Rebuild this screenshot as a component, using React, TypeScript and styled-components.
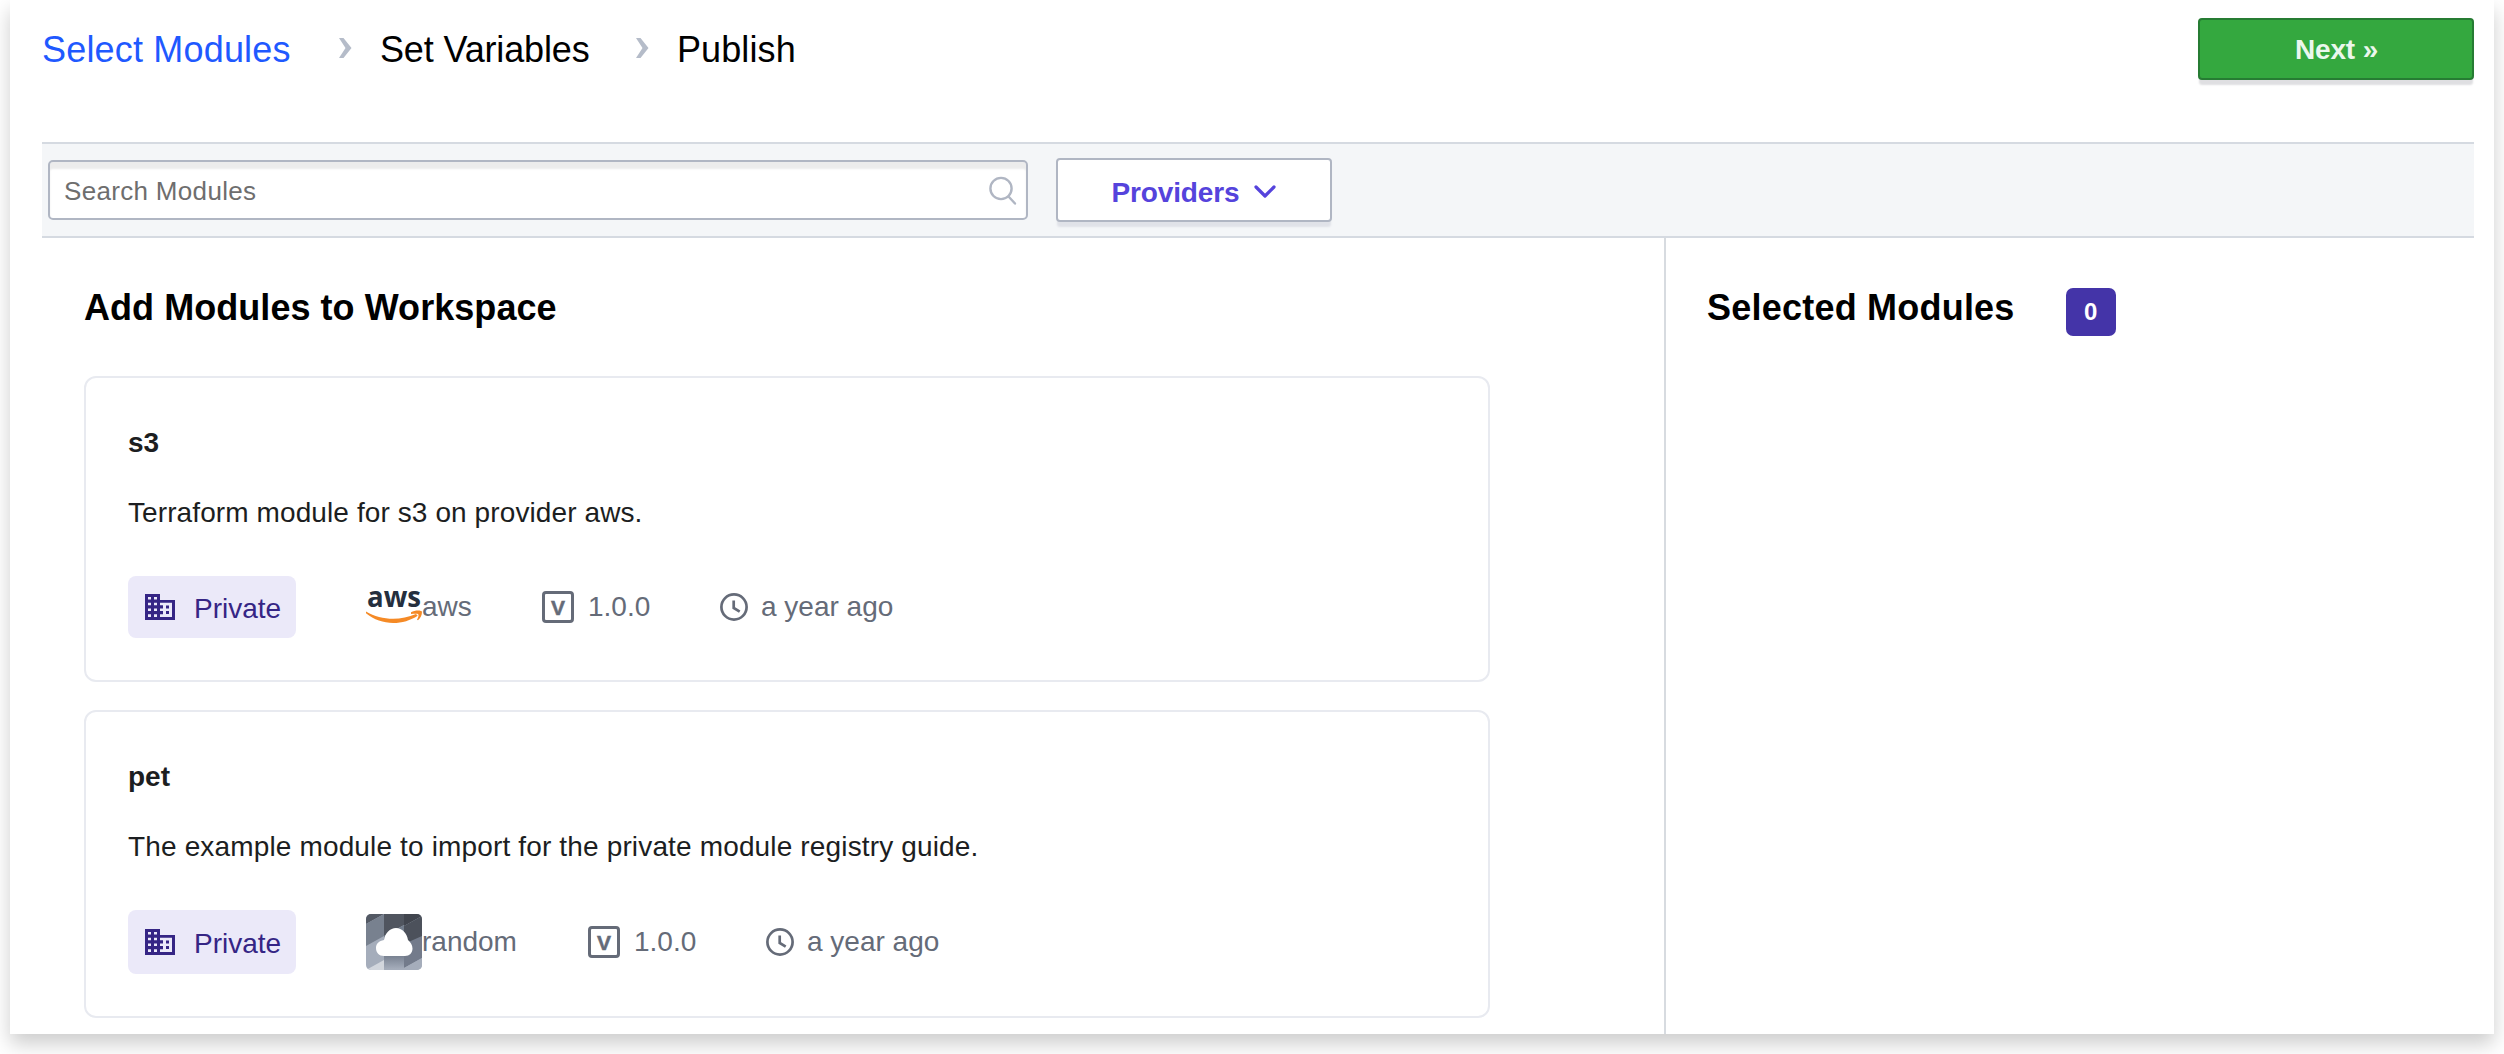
import React from "react";
import styled, { createGlobalStyle } from "styled-components";

const Global = createGlobalStyle`
  * { box-sizing: border-box; }
  body { margin: 0; background: #fff; overflow: hidden; font-family: "Liberation Sans", Arial, sans-serif; color: #000; }
  h2, h3, p { margin: 0; }
  button, input { font-family: inherit; margin: 0; }
  svg { display: block; flex: none; overflow: visible; }
`;
const Page = styled.main`
  height: 1054px;
  padding: 0 10px;
`;
const Panel = styled.div`
  height: 1034px;
  padding: 0 20px 0 32px;
  display: flex;
  flex-direction: column;
  background: #fff;
  box-shadow: 0 10px 19px rgba(0, 0, 0, 0.2);
`;
const Header = styled.header`
  height: 142px;
  flex: none;
  padding-top: 18px;
  display: flex;
  justify-content: space-between;
  align-items: flex-start;
`;
const Steps = styled.nav`
  display: flex;
  align-items: center;
  height: 62px;
  line-height: 40px;
  font-size: 36px;
`;
const Step = styled.span<{ $active?: boolean; $width: number; $track?: number }>`
  width: ${p => p.$width}px;
  padding-top: 2px;
  white-space: nowrap;
  letter-spacing: ${p => p.$track ?? 0}px;
  color: ${p => (p.$active ? "#1f59ff" : "#000")};
`;
const StepArrow = styled.svg`
  width: 13px;
  height: 20px;
  margin: 0 28px 2px 47px;
`;
const ActionButton = styled.button<{ $primary?: boolean }>`
  width: 276px;
  height: ${p => (p.$primary ? 62 : 64)}px;
  display: flex;
  align-items: center;
  justify-content: center;
  gap: 15px;
  padding: ${p => (p.$primary ? "2px 0 0 1px" : "5px 0 0 0")};
  font-size: 28px;
  font-weight: 700;
  letter-spacing: -0.15px;
  border-radius: 4px;
  border: 2px solid ${p => (p.$primary ? "#267c33" : "#b0b6c3")};
  background: ${p => (p.$primary ? "#34a83f" : "#fff")};
  color: ${p => (p.$primary ? "#ebf7ed" : "#5543dc")};
  box-shadow: 0 6px 2px -1px ${p => (p.$primary ? "#dfdfe2" : "#e0e2e8")};
`;
const Toolbar = styled.div`
  height: 96px;
  flex: none;
  display: flex;
  align-items: center;
  gap: 28px;
  padding: 0 6px;
  background: #f4f6f8;
  border: solid #d5dae1;
  border-width: 2px 0;
`;
const SearchBox = styled.label`
  width: 980px;
  height: 60px;
  display: flex;
  align-items: center;
  padding: 2px 9px 0 14px;
  border: 2px solid #b0b6c3;
  border-radius: 5px;
  background: #fff;
  box-shadow: inset 0 7px 2px #ececec;
`;
const SearchInput = styled.input`
  flex: 1;
  padding: 0;
  border: 0;
  outline: 0;
  background: transparent;
  font-size: 26px;
  letter-spacing: 0.32px;
  &::placeholder { color: #6e6e6e; opacity: 1; }
`;
const Columns = styled.div`
  flex: 1;
  min-height: 0;
  display: flex;
`;
const ModulesColumn = styled.section`
  width: 1624px;
  padding: 47px 0 0 42px;
  border-right: 2px solid #d7dbe0;
`;
const SelectedColumn = styled.section`
  padding: 47px 0 0 41px;
  display: flex;
  align-items: flex-start;
  gap: 51px;
`;
const Title = styled.h2<{ $track?: number }>`
  font-size: 36px;
  line-height: 46px;
  letter-spacing: ${p => p.$track ?? 0}px;
  white-space: nowrap;
`;
const Count = styled.span`
  width: 50px;
  height: 48px;
  margin-top: 3px;
  border-radius: 7px;
  background: #4434a8;
  color: #fff;
  font-size: 24px;
  font-weight: 700;
  line-height: 48px;
  text-align: center;
`;
const List = styled.div`
  display: flex;
  flex-direction: column;
  gap: 28px;
  margin-top: 45px;
`;
const Card = styled.article<{ $height: number }>`
  width: 1406px;
  height: ${p => p.$height}px;
  padding: 49px 42px 0;
  border: 2px solid #e8eaf0;
  border-radius: 12px;
  color: #1c1e21;
  font-size: 28px;
`;
const Name = styled.h3`
  font-size: 28px;
  line-height: 32px;
`;
const Description = styled.p<{ $track: number }>`
  margin-top: 38px;
  line-height: 32px;
  white-space: nowrap;
  letter-spacing: ${p => p.$track}px;
`;
const Meta = styled.div<{ $tall?: boolean }>`
  height: ${p => (p.$tall ? 64 : 62)}px;
  margin-top: 47px;
  display: flex;
  align-items: center;
  color: #656b78;
`;
const Visibility = styled.span`
  width: 168px;
  height: 100%;
  margin-right: 70px;
  padding-left: 17px;
  display: flex;
  align-items: center;
  gap: 19px;
  border-radius: 8px;
  background: #ebe9f9;
  color: #352585;
`;
const MetaItem = styled.span<{ $width: number; $gap: number }>`
  width: ${p => p.$width}px;
  display: flex;
  align-items: center;
  gap: ${p => p.$gap}px;
  white-space: nowrap;
`;
const Label = styled.span<{ $drop?: number }>`
  line-height: 32px;
  padding-top: ${p => p.$drop ?? 0}px;
`;
const VersionMark = styled.span`
  width: 32px;
  height: 32px;
  border: 3px solid #656b78;
  border-radius: 4px;
  font-size: 21px;
  font-weight: 700;
  line-height: 27px;
  text-align: center;
  -webkit-text-stroke: 0.5px #656b78;
`;

const Arrow = () => (
  <StepArrow viewBox="0 0 13 20"><path d="M0 0h4.5l8 10-8 10H0l6.5-10z" fill="#b5bcc9" /></StepArrow>
);
const SearchIcon = () => (
  <svg width="28" height="30" viewBox="0 0 28 30" fill="none" stroke="#b0b6c3" strokeWidth="2.4" strokeLinecap="round">
    <circle cx="12" cy="12.5" r="10.6" /><path d="M19.5 20.5l6.5 7" />
  </svg>
);
const DownIcon = () => (
  <svg width="22" height="16" viewBox="0 0 22 16" fill="none" stroke="#5543dc" strokeWidth="3.2" strokeLinecap="round" strokeLinejoin="round">
    <path d="M2 2l9 9 9-9" />
  </svg>
);
const BuildingIcon = () => (
  <svg width="30" height="26" viewBox="0 0 30 26">
    <path fill="currentColor" fillRule="evenodd" d="M0 0h15v6h15v20H0zM3 3v2.5h3V3zm6 0v2.5h3V3zM3 8.700v2.500h3V8.700zm6 0v2.500h3V8.700zM3 14.500v2.500h3v-2.500zm6 0v2.500h3v-2.500zM3 20.300v2.700h3v-2.700zm6 0v2.700h3v-2.700zM15 8.700v2.500h3v3.300h-3v2.500h3v3.300h-3v2.700h12V8.700z" />
    <path fill="currentColor" d="M21 11.500h3v3h-3zM21 17h3v3h-3z" />
  </svg>
);
const ClockIcon = () => (
  <svg width="28" height="28" viewBox="0 0 28 28" fill="none" stroke="#656b78" strokeWidth="2.700">
    <circle cx="14" cy="14" r="12.600" /><path d="M13.700 7.500v7.500l6 3.700" />
  </svg>
);
const AwsText = styled.text`
  font-family: "Open Sans", "Noto Sans", sans-serif;
  font-size: 29px;
  font-weight: 700;
`;
const AwsLogo = () => (
  <svg width="56" height="32" viewBox="0 0 56 32">
    <AwsText x="1" y="16" textLength="54" lengthAdjust="spacingAndGlyphs" fill="#252f3e">aws</AwsText>
    <path d="M0 20.500C15 29.500 34 30 50 23l1.700 1.700C37 34.500 15 35 0 22.300z" fill="#f58a26" />
    <path d="M45 21.300c4-2.700 11-2.200 11-.5 0 3.200-1.500 6.500-4 8.500l-1-.5c1-2 2-4.500 1.300-5.500-1-1-4-.4-7.300-.4z" fill="#f58a26" />
  </svg>
);
const CloudLogo = () => (
  <svg width="56" height="56" viewBox="0 0 56 56">
    <defs>
      <clipPath id="tile"><rect width="56" height="56" rx="5" /></clipPath>
      <linearGradient id="shade" x1="0" y1="0" x2="0" y2="1"><stop offset="0" stopColor="#727b8b" /><stop offset="1" stopColor="#a5adbb" /></linearGradient>
    </defs>
    <g clipPath="url(#tile)">
      <path fill="#a5adbb" d="M0 0h56v56H0z" />
      <path fill="#535964" d="M0 0h18v0L0 10z" />
      <path fill="#78818f" d="M0 10L18 0v22L0 32z" />
      <path fill="#50555f" d="M18 0h20v11L18 22z" />
      <path fill="#737d8c" d="M18 22l20-11v30H18z" />
      <path fill="#41454e" d="M38 0h18v2L38 12z" />
      <path fill="#4c515b" d="M38 12L56 2v25L38 32z" />
      <path fill="#737b8b" d="M38 30l18-8v22l-18 10z" />
      <path fill="#a5adbb" d="M38 54l18-10v12H38z" />
      <path fill="#d2d6dd" d="M0 56l18-10v10z" />
      <path fill="url(#shade)" d="M18 40h20v15H18z" />
      <path fill="#fff" d="M18 42C13 42 10 38.500 10 34c0-4.500 3-7 8-8 1-7 6-12 12-12s11 5 12 12c2.500 2 4.500 5 4.500 8.500 0 4.500-3 7.500-7.500 7.500z" />
    </g>
  </svg>
);

type Module = { name: string; description: string; provider: string; width: number; tall: boolean; track: number };
const modules: Module[] = [
  { name: "s3", description: "Terraform module for s3 on provider aws.", provider: "aws", width: 176, tall: false, track: 0.1 },
  { name: "pet", description: "The example module to import for the private module registry guide.", provider: "random", width: 222, tall: true, track: 0.15 },
];

const ModuleCard = ({ item }: { item: Module }) => (
  <Card $height={item.tall ? 308 : 306}>
    <Name>{item.name}</Name>
    <Description $track={item.track}>{item.description}</Description>
    <Meta $tall={item.tall}>
      <Visibility><BuildingIcon /><Label $drop={3}>Private</Label></Visibility>
      <MetaItem $width={item.width} $gap={0}>
        {item.provider === "aws" ? <AwsLogo /> : <CloudLogo />}<Label>{item.provider}</Label>
      </MetaItem>
      <MetaItem $width={178} $gap={14}><VersionMark>V</VersionMark><Label>1.0.0</Label></MetaItem>
      <MetaItem $width={180} $gap={13}><ClockIcon /><Label>a year ago</Label></MetaItem>
    </Meta>
  </Card>
);

export default function App() {
  return (
    <Page>
      <Global />
      <Panel>
        <Header>
          <Steps>
            <Step $active $width={250} $track={0.18}>Select Modules</Step><Arrow />
            <Step $width={209} $track={-0.15}>Set Variables</Step><Arrow />
            <Step $width={120} $track={0.1}>Publish</Step>
          </Steps>
          <ActionButton $primary>Next »</ActionButton>
        </Header>
        <Toolbar>
          <SearchBox><SearchInput placeholder="Search Modules" /><SearchIcon /></SearchBox>
          <ActionButton>Providers <DownIcon /></ActionButton>
        </Toolbar>
        <Columns>
          <ModulesColumn>
            <Title $track={0.05}>Add Modules to Workspace</Title>
            <List>{modules.map(m => <ModuleCard key={m.name} item={m} />)}</List>
          </ModulesColumn>
          <SelectedColumn>
            <Title $track={0.22}>Selected Modules</Title>
            <Count>0</Count>
          </SelectedColumn>
        </Columns>
      </Panel>
    </Page>
  );
}
